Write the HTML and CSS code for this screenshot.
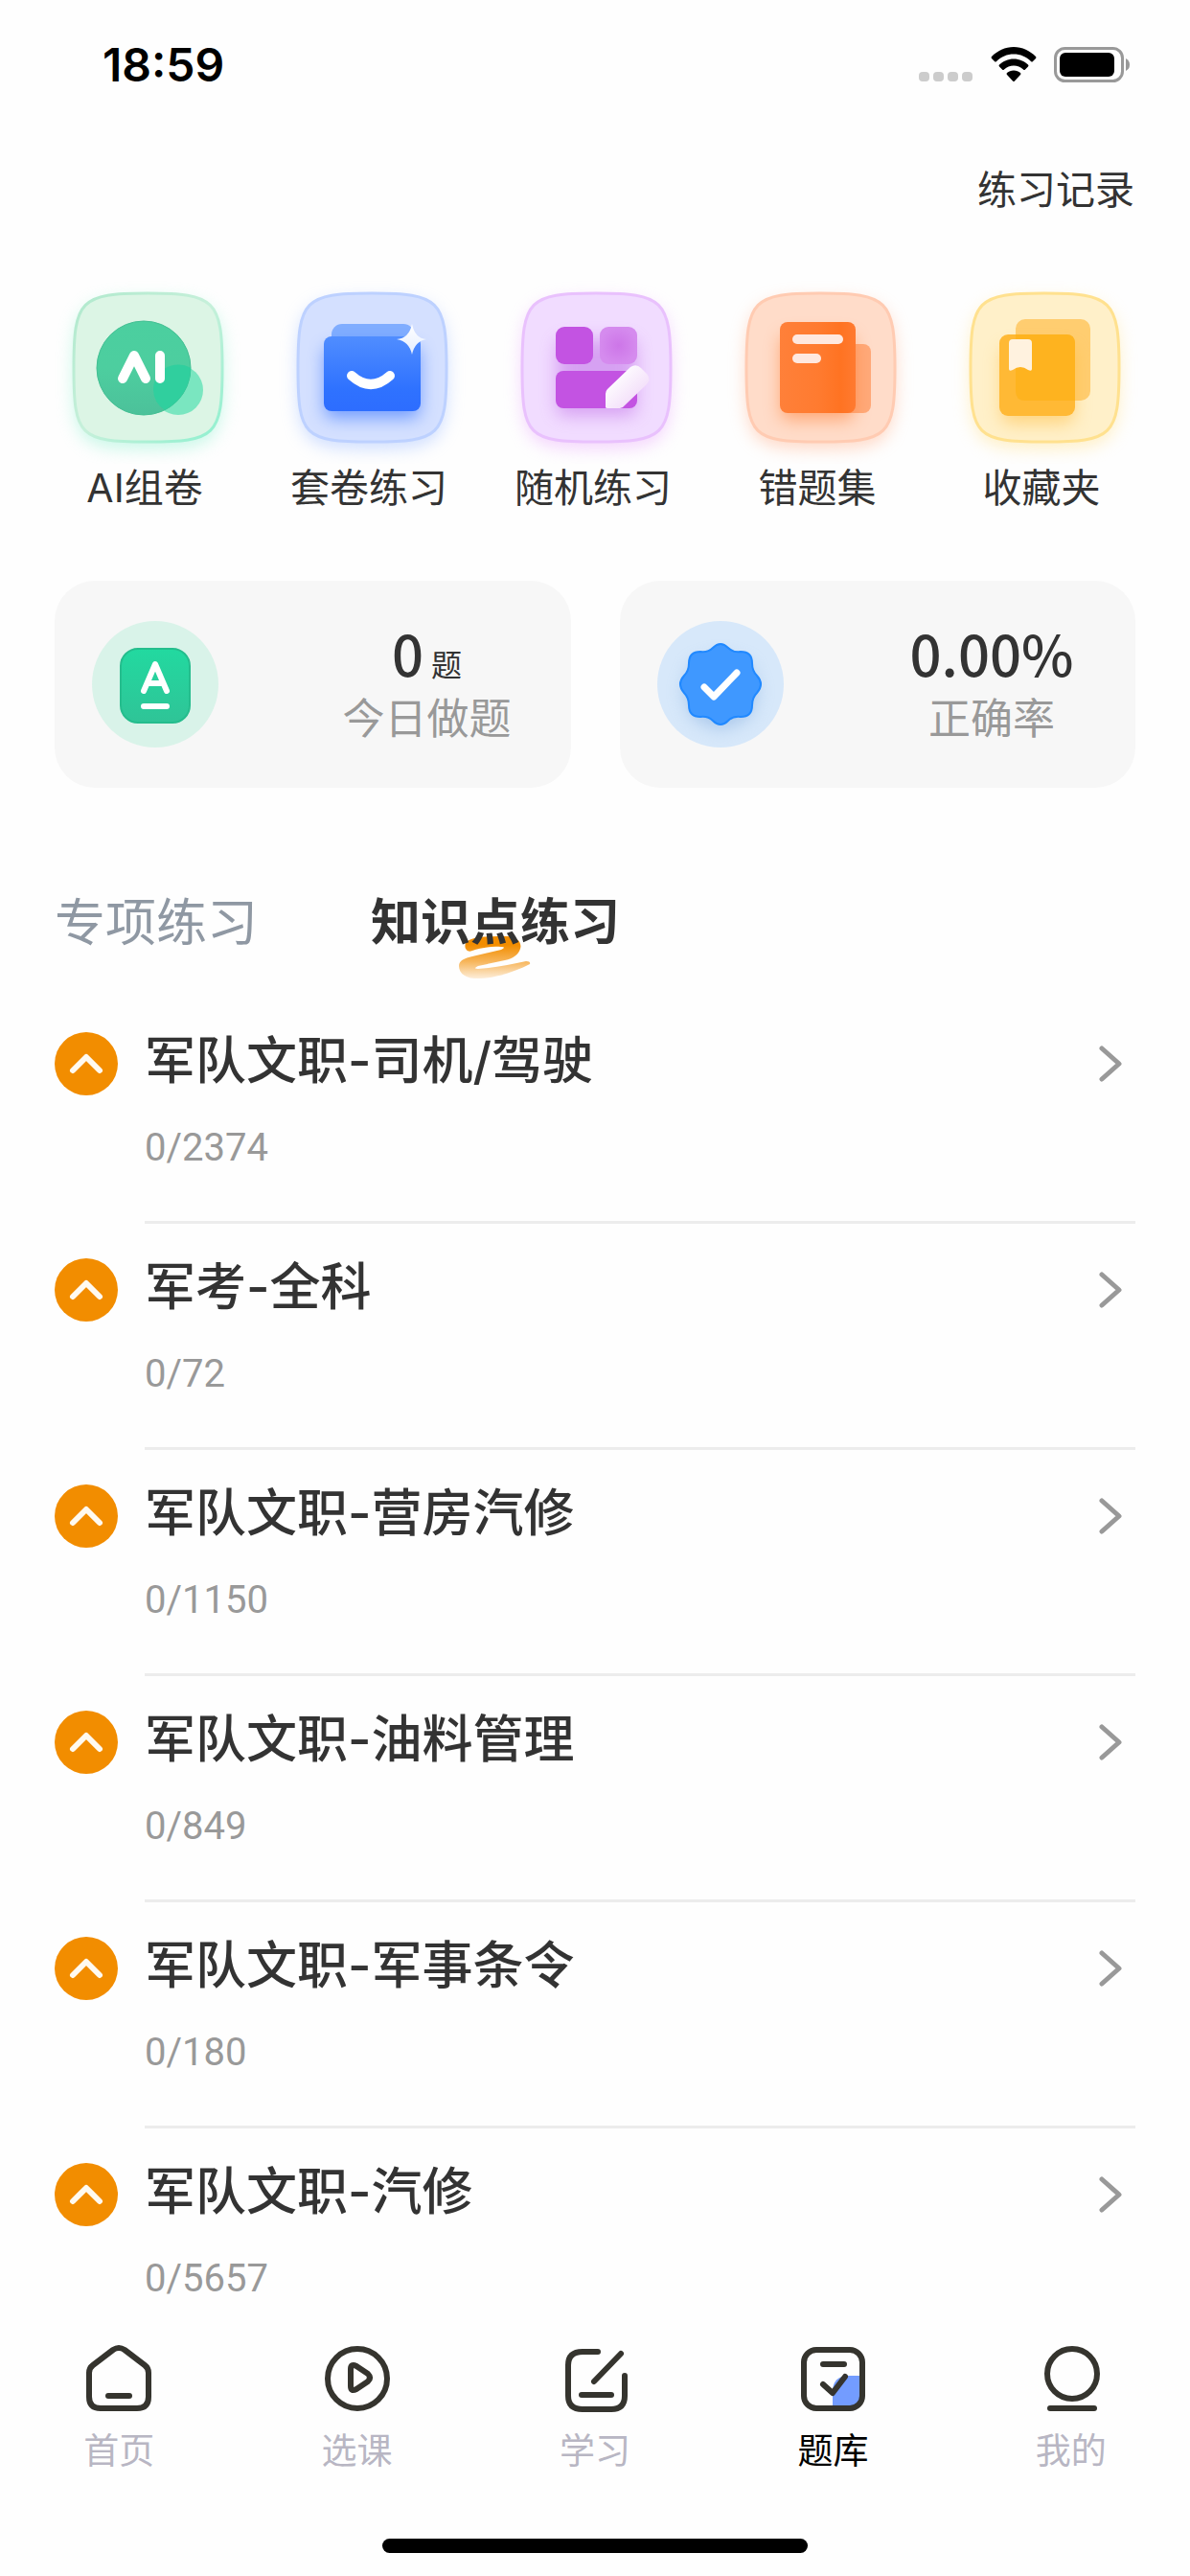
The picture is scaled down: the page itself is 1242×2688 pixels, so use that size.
FILE: index.html
```html
<!DOCTYPE html>
<html lang="zh-CN">
<head>
  <meta charset="UTF-8">
  <meta name="viewport" content="width=device-width, initial-scale=1.0">
  <title>题库</title>
  <link rel="stylesheet" href="styles.css">
</head>
<body>
  <!-- Shared icons -->
  <svg width="0" height="0" class="sprite" aria-hidden="true">
    <symbol id="up" viewBox="0 0 66 66">
      <circle cx="33" cy="33" r="33" fill="#f28d00"/>
      <path d="M19 40L33 26L47 40" fill="none" stroke="#fffaf0" stroke-width="6" stroke-linecap="round" stroke-linejoin="round"/>
    </symbol>
    <symbol id="arrow" viewBox="0 0 24 38">
      <path d="M3 3L21 19L3 35" fill="none" stroke="#999" stroke-width="5" stroke-linecap="round" stroke-linejoin="round"/>
    </symbol>
    <symbol id="tile" viewBox="0 0 201 201">
      <path d="M26 101C26 30 33 23 103 23S181 30 181 101S174 178 103 178S26 172 26 101Z"/>
    </symbol>
  </svg>

  <header class="status-bar">
    <span class="time">18:59</span>
    <div class="status-icons">
      <svg width="57" height="37" viewBox="0 0 57 37" fill="#ccc">
        <rect x="0" y="26" width="11" height="10" rx="4"/>
        <rect x="15" y="26" width="11" height="10" rx="4"/>
        <rect x="30" y="26" width="11" height="10" rx="4"/>
        <rect x="45" y="26" width="11" height="10" rx="4"/>
      </svg>
      <svg width="48" height="37" viewBox="0 0 48 37">
        <path d="M24 0C33 0 41 4 47 10Q48 11 47 12L44 15Q43 16 42 15C37 10 31 7.500 24 7.500S11 10 6 15Q5 16 4 15L1 12Q0 11 1 10C7 4 15 0 24 0Z"/>
        <path d="M24 12.500C30 12.500 35 15 39 18.500Q40 19.500 39 20.500L36 23.500Q35 24.500 34 23.500C31 21 28 19.500 24 19.500S17 21 14 23.500Q13 24.500 12 23.500L9 20.500Q8 19.500 9 18.500C13 15 18 12.500 24 12.500Z"/>
        <path d="M24 24.500C27 24.500 29 25.500 31 27Q32 28 31 29L25 35.500Q24 36.500 23 35.500L17 29Q16 28 17 27C19 25.500 21 24.500 24 24.500Z"/>
      </svg>
      <svg width="80" height="37" viewBox="0 0 80 37">
        <rect x="1.500" y="1.500" width="70" height="34" rx="10" fill="none" stroke="#999" stroke-width="3"/>
        <rect x="6" y="6" width="57" height="25" rx="6"/>
        <path d="M75 12Q79 14 79 18.500T75 25Z" fill="#999"/>
      </svg>
    </div>
  </header>

  <main class="content">
    <div class="top-bar">
      <a href="#" class="record-link">练习记录</a>
    </div>

    <nav class="entries">
      <a href="#" class="entry">
        <svg width="201" height="201" viewBox="0 0 201 201">
          <defs>
            <linearGradient id="aiLine" x1="0" y1="0" x2="1" y2="1"><stop offset="0" stop-color="#b0e9cd"/><stop offset=".5" stop-color="#c6f0da"/><stop offset="1" stop-color="#8ef0cf"/></linearGradient>
            <linearGradient id="aiDot" x1="0" y1="0" x2="0" y2="1"><stop offset="0" stop-color="#4bcf9f"/><stop offset=".5" stop-color="#4dce9f"/><stop offset="1" stop-color="#4cc19a"/></linearGradient>
          </defs>
          <use class="glow glow-green" href="#tile"/>
          <use href="#tile" fill="#dcf5e5" stroke="url(#aiLine)" stroke-width="3"/>
          <circle cx="135" cy="124" r="26" fill="#7ae6c0"/>
          <circle cx="99" cy="101" r="49" fill="url(#aiDot)" stroke="#43bf93" stroke-width="1"/>
          <path d="M109 124A26 26 0 0 1 148 101A49 49 0 0 1 121 145A26 26 0 0 1 109 124Z" fill="#30cf9e"/>
          <path d="M77 112L89 88L101 112M116 88V112" fill="none" stroke="#fff" stroke-width="10" stroke-linecap="round" stroke-linejoin="round"/>
        </svg>
        <span>AI组卷</span>
      </a>
      <a href="#" class="entry">
        <svg width="201" height="201" viewBox="0 0 201 201">
          <defs>
            <linearGradient id="setFront" x1="0" y1="0" x2="0" y2="1"><stop offset="0" stop-color="#508dff"/><stop offset=".7" stop-color="#2f72ff"/><stop offset="1" stop-color="#2d6dff"/></linearGradient>
            <linearGradient id="setStar" x1="0" y1="0" x2="0" y2="1"><stop offset="0" stop-color="#fff"/><stop offset="1" stop-color="#e5eeff"/></linearGradient>
          </defs>
          <use class="glow glow-blue" href="#tile"/>
          <use href="#tile" fill="#d4e0ff" stroke="#bdd1ff" stroke-width="3"/>
          <rect x="61" y="55" width="86" height="30" rx="11" fill="#80adff"/>
          <rect class="glow glow-blue-deep" x="54" y="72" width="99" height="74" rx="8"/>
          <rect x="53" y="68" width="101" height="78" rx="8" fill="url(#setFront)"/>
          <path d="M82 109Q102 127 122 109" fill="none" stroke="#fff" stroke-width="10" stroke-linecap="round"/>
          <path d="M145 55Q148 70 160 71Q148 73 145 87Q142 73 129 71Q142 70 145 55Z" fill="url(#setStar)"/>
        </svg>
        <span>套卷练习</span>
      </a>
      <a href="#" class="entry">
        <svg width="201" height="201" viewBox="0 0 201 201">
          <defs>
            <linearGradient id="penFill" x1="0" y1="0" x2="1" y2="1"><stop offset=".2" stop-color="#fff"/><stop offset="1" stop-color="#edcff7"/></linearGradient>
            <radialGradient id="lightTile"><stop offset="0" stop-color="#cd76e8"/><stop offset="1" stop-color="#d58bee"/></radialGradient>
          </defs>
          <use class="glow glow-purple" href="#tile"/>
          <use href="#tile" fill="#f1dcff" stroke="#e9c1fd" stroke-width="3"/>
          <rect class="glow glow-purple-deep" x="62" y="64" width="83" height="80" rx="8"/>
          <rect x="61" y="58" width="39" height="39" rx="9" fill="#c353e2"/>
          <rect x="107" y="58" width="39" height="39" rx="9" fill="url(#lightTile)"/>
          <rect x="61" y="104" width="85" height="39" rx="8" fill="#c353e2"/>
          <path d="M113 142V128Q113 125 115 123L139 100Q145 96 150 101L156 107Q161 113 156 118L133 140Q131 143 128 143H115Q113 143 113 142Z" fill="url(#penFill)"/>
        </svg>
        <span>随机练习</span>
      </a>
      <a href="#" class="entry">
        <svg width="201" height="201" viewBox="0 0 201 201">
          <defs>
            <linearGradient id="wrongFront" x1="0" y1="0" x2="1" y2="0"><stop offset="0" stop-color="#ff8039"/><stop offset=".5" stop-color="#ff7b30"/><stop offset=".8" stop-color="#ff7322"/><stop offset="1" stop-color="#ff7a30"/></linearGradient>
          </defs>
          <use class="glow glow-orange" href="#tile"/>
          <use href="#tile" fill="#ffdcc9" stroke="#ffcbb2" stroke-width="3"/>
          <rect x="120" y="76" width="36" height="72" rx="8" fill="#ffa979"/>
          <rect class="glow glow-orange-deep" x="62" y="60" width="76" height="88" rx="8"/>
          <rect x="61" y="53" width="79" height="95" rx="8" fill="url(#wrongFront)"/>
          <rect x="74" y="66" width="53" height="10" rx="5" fill="#ffe8df"/>
          <rect x="74" y="86" width="30" height="10" rx="5" fill="#ffe8df"/>
        </svg>
        <span>错题集</span>
      </a>
      <a href="#" class="entry">
        <svg width="201" height="201" viewBox="0 0 201 201">
          <use class="glow glow-yellow" href="#tile"/>
          <use href="#tile" fill="#fff0c9" stroke="#ffe18f" stroke-width="3"/>
          <rect x="73" y="50" width="78" height="85" rx="10" fill="#ffcd70"/>
          <rect class="glow glow-yellow-deep" x="58" y="72" width="76" height="80" rx="9"/>
          <rect x="56" y="66" width="79" height="85" rx="9" fill="#ffb935"/>
          <path d="M73 66H126Q135 66 135 75V135H83Q73 135 73 125Z" fill="#feb31f"/>
          <path d="M66 75Q66 71 70 71H86Q90 71 90 75V102Q90 105 86 103Q78 97 70 103Q66 105 66 102Z" fill="#fff2df"/>
        </svg>
        <span>收藏夹</span>
      </a>
    </nav>

    <section class="stats">
      <div class="stat-card">
        <svg width="132" height="132" viewBox="0 0 132 132">
          <defs>
            <linearGradient id="book" x1="0" y1="0" x2="0" y2="1"><stop offset="0" stop-color="#22d9a0"/><stop offset="1" stop-color="#2fc497"/></linearGradient>
          </defs>
          <circle cx="66" cy="66" r="66" fill="#d9f3e9"/>
          <rect x="30" y="29" width="72" height="77" rx="18" fill="url(#book)" stroke="#25bd8d" stroke-width="2"/>
          <path d="M54 73L66 45L78 73M58 65H74M54 89H78" fill="none" stroke="#fff" stroke-width="6" stroke-linecap="round" stroke-linejoin="round"/>
        </svg>
        <div class="stat-text">
          <div class="stat-value">0<span class="unit">题</span></div>
          <div class="stat-label">今日做题</div>
        </div>
      </div>
      <div class="stat-card">
        <svg width="132" height="132" viewBox="0 0 132 132">
          <circle cx="66" cy="66" r="66" fill="#d7e8fa"/>
          <path class="glow glow-badge" d="M66 30L95 38L105 66L95 95L66 107L37 95L27 66L37 38Z"/>
          <path d="M58 28Q66 20 74 28Q79 33 87 32Q99 32 99 44Q99 52 104 57Q112 66 104 75Q99 80 99 88Q99 100 87 100Q79 99 74 104Q66 112 58 104Q53 99 45 100Q33 100 33 88Q33 80 28 75Q20 66 28 57Q33 52 33 44Q33 32 45 32Q53 33 58 28Z" fill="#3f98ff" stroke="#2189ff" stroke-width="2"/>
          <path d="M49 69L59 79L83 54" fill="none" stroke="#fff" stroke-width="7" stroke-linecap="round" stroke-linejoin="round"/>
        </svg>
        <div class="stat-text">
          <div class="stat-value">0.00%</div>
          <div class="stat-label">正确率</div>
        </div>
      </div>
    </section>

    <div class="tabs">
      <button type="button" class="tab">专项练习</button>
      <button type="button" class="tab active">
        <svg class="scribble" width="76" height="44" viewBox="0 0 76 44">
          <defs>
            <linearGradient id="brush" x1="0" y1="0" x2="0" y2="1"><stop offset=".2" stop-color="#f28d00"/><stop offset=".6" stop-color="#f7b65c"/><stop offset="1" stop-color="#fdeeda"/></linearGradient>
          </defs>
          <path d="M7 13C5 8 8 4 16 2C26 0 40 0 50 0C61 0 66 7 64 13C62 19 57 23 48 25L20 31Q14 34 20 34C38 33 55 29 70 26Q75 26 74 29C60 36 42 43 22 44C6 45 0 38 0 31C0 25 6 23 14 21L44 14Q50 11 44 11C34 10 22 12 14 15Q9 17 7 13Z" fill="url(#brush)"/>
        </svg>
        <span>知识点练习</span>
      </button>
    </div>

    <ul class="list">
      <li class="row">
        <svg class="row-icon" width="66" height="66"><use href="#up"/></svg>
        <a href="#" class="row-body">
          <div><h2>军队文职-司机/驾驶</h2><p>0/2374</p></div>
          <svg class="row-arrow" width="24" height="38"><use href="#arrow"/></svg>
        </a>
      </li>
      <li class="row">
        <svg class="row-icon" width="66" height="66"><use href="#up"/></svg>
        <a href="#" class="row-body">
          <div><h2>军考-全科</h2><p>0/72</p></div>
          <svg class="row-arrow" width="24" height="38"><use href="#arrow"/></svg>
        </a>
      </li>
      <li class="row">
        <svg class="row-icon" width="66" height="66"><use href="#up"/></svg>
        <a href="#" class="row-body">
          <div><h2>军队文职-营房汽修</h2><p>0/1150</p></div>
          <svg class="row-arrow" width="24" height="38"><use href="#arrow"/></svg>
        </a>
      </li>
      <li class="row">
        <svg class="row-icon" width="66" height="66"><use href="#up"/></svg>
        <a href="#" class="row-body">
          <div><h2>军队文职-油料管理</h2><p>0/849</p></div>
          <svg class="row-arrow" width="24" height="38"><use href="#arrow"/></svg>
        </a>
      </li>
      <li class="row">
        <svg class="row-icon" width="66" height="66"><use href="#up"/></svg>
        <a href="#" class="row-body">
          <div><h2>军队文职-军事条令</h2><p>0/180</p></div>
          <svg class="row-arrow" width="24" height="38"><use href="#arrow"/></svg>
        </a>
      </li>
      <li class="row">
        <svg class="row-icon" width="66" height="66"><use href="#up"/></svg>
        <a href="#" class="row-body">
          <div><h2>军队文职-汽修</h2><p>0/5657</p></div>
          <svg class="row-arrow" width="24" height="38"><use href="#arrow"/></svg>
        </a>
      </li>
    </ul>
  </main>

  <footer class="bottom">
    <nav class="tab-bar">
      <a href="#" class="tab-item">
        <svg width="72" height="72" viewBox="0 0 72 72">
          <path d="M5 30Q5 25 9 22L30 6Q36 2 42 6L63 22Q67 25 67 30V55Q67 67 55 67H17Q5 67 5 55Z"/>
          <path d="M25 54H47"/>
        </svg>
        <span>首页</span>
      </a>
      <a href="#" class="tab-item">
        <svg width="72" height="72" viewBox="0 0 72 72">
          <circle cx="36" cy="36" r="31"/>
          <path d="M29 26Q29 20 35 23L47 31Q51 35 47 39L35 47Q29 50 29 44Z"/>
        </svg>
        <span>选课</span>
      </a>
      <a href="#" class="tab-item">
        <svg width="72" height="72" viewBox="0 0 72 72">
          <path d="M39 8H23Q8 8 8 22V54Q8 68 23 68H53Q67 68 67 54V33"/>
          <path d="M35 39L63 10"/>
          <path d="M22 53H53"/>
        </svg>
        <span>学习</span>
      </a>
      <a href="#" class="tab-item current">
        <svg width="72" height="72" viewBox="0 0 72 72">
          <path d="M36 66V50Q36 33 53 33H67V56Q67 66 57 66Z" fill="#739cff" stroke="none"/>
          <rect x="6" y="6" width="61" height="61" rx="13"/>
          <path d="M26 21H48M26 42L36 51L49 34"/>
        </svg>
        <span>题库</span>
      </a>
      <a href="#" class="tab-item">
        <svg width="72" height="72" viewBox="0 0 72 72">
          <circle cx="37" cy="31" r="26"/>
          <path d="M14 67H60"/>
        </svg>
        <span>我的</span>
      </a>
    </nav>
    <div class="home-indicator"></div>
  </footer>
</body>
</html>
```
FILE: styles.css
```css
* {
  margin: 0;
  padding: 0;
  box-sizing: border-box;
}

body {
  display: flex;
  flex-direction: column;
  height: 100vh;
  overflow: hidden;
  background-color: #fefefe;
  color: #333;
  font-family: Inter, "Noto Sans CJK SC", sans-serif;
}

a {
  color: inherit;
  text-decoration: none;
}

svg {
  display: block;
  flex-shrink: 0;
}

.sprite {
  position: absolute;
}

/* Status bar */
.status-bar {
  display: flex;
  justify-content: space-between;
  align-items: center;
  height: 132px;
  padding: 3px 62px 0 107px;
  color: #000;
}

.time {
  font-size: 48px;
  font-weight: 600;
}

.status-icons {
  display: flex;
  gap: 18px;
}

/* Scrolling content */
.content {
  flex: 1;
  min-height: 0;
  overflow-y: auto;
  scrollbar-width: none;
}

.top-bar {
  display: flex;
  justify-content: flex-end;
  align-items: center;
  height: 132px;
  padding: 0 58px;
}

.record-link {
  font-size: 41px;
  line-height: 60px;
}

/* Entry icons */
.entries {
  display: grid;
  grid-template-columns: repeat(5, 1fr);
  padding: 19px 38px 0 34px;
}

.entry {
  display: flex;
  flex-direction: column;
  align-items: center;
  font-size: 41px;
  line-height: 60px;
  white-space: nowrap;
}

.entry span {
  margin-top: -5px;
}

.glow {
  filter: blur(9px);
  opacity: 0.5;
  transform: translateY(7px);
}

.glow-green { fill: #8ef0cf; }
.glow-blue { fill: #9dbcff; }
.glow-purple { fill: #e9a8fb; }
.glow-orange { fill: #ffb08a; }
.glow-yellow { fill: #ffe08a; }
.glow-blue-deep { fill: #2d6dff; opacity: 0.6; }
.glow-purple-deep { fill: #b04ae0; opacity: 0.4; }
.glow-orange-deep { fill: #ff7322; opacity: 0.5; }
.glow-yellow-deep { fill: #ffb935; opacity: 0.5; }
.glow-badge { fill: #7fa9dc; opacity: 0.5; }

/* Stat cards */
.stats {
  display: grid;
  grid-template-columns: 1fr 1fr;
  gap: 51px;
  padding: 67px 57px 0;
}

.stat-card {
  display: flex;
  justify-content: space-between;
  align-items: center;
  height: 216px;
  padding-left: 39px;
  border-radius: 42px;
  background-color: #f7f7f7;
}

.stat-text {
  width: 300px;
  padding-top: 4px;
  text-align: center;
}

.stat-value {
  font-family: "Noto Sans CJK SC", sans-serif;
  font-size: 58px;
  font-weight: 500;
  line-height: 64px;
}

.unit {
  margin-left: 8px;
  font-size: 32px;
  font-weight: 400;
  line-height: 1;
}

.stat-label {
  margin-top: 4px;
  color: #999;
  font-size: 44px;
  line-height: 66px;
}

/* Tabs */
.tabs {
  display: flex;
  gap: 118px;
  padding: 101px 57px 0;
}

.tab {
  position: relative;
  border: none;
  background: none;
  color: #8f98a3;
  font-family: inherit;
  font-size: 53px;
  line-height: 80px;
  cursor: pointer;
}

.tab.active {
  color: #333;
  font-size: 52px;
  font-weight: 700;
}

.tab.active span {
  position: relative;
}

.scribble {
  position: absolute;
  left: 92px;
  bottom: -18px;
}

/* Knowledge list */
.list {
  list-style: none;
  padding: 38px 57px 0;
}

.row {
  display: flex;
  gap: 28px;
  height: 236px;
}

.row-icon {
  margin-top: 36px;
}

.row-body {
  display: flex;
  flex: 1;
  justify-content: space-between;
  border-bottom: 3px solid #ececec;
}

.row-body h2 {
  margin-top: 26px;
  font-size: 53px;
  font-weight: 500;
  line-height: 80px;
}

.row-body p {
  margin-top: 21px;
  color: #999;
  font-family: Roboto, sans-serif;
  font-size: 40px;
  line-height: 60px;
}

.row-arrow {
  margin: 50px 14px 0 0;
}

/* Bottom bar */
.bottom {
  height: 249px;
  background-color: #fefefe;
}

.tab-bar {
  display: grid;
  grid-template-columns: repeat(5, 1fr);
  padding-top: 7px;
}

.tab-item {
  display: flex;
  flex-direction: column;
  align-items: center;
  gap: 12px;
  color: #b8b6c3;
  font-size: 37px;
  line-height: 56px;
}

.tab-item.current {
  color: #000;
}

.tab-item svg {
  fill: none;
  stroke: #35342e;
  stroke-width: 6;
  stroke-linecap: round;
  stroke-linejoin: round;
}

.home-indicator {
  width: 444px;
  height: 15px;
  margin: 63px auto 0;
  border-radius: 8px;
  background-color: #000;
}
```
